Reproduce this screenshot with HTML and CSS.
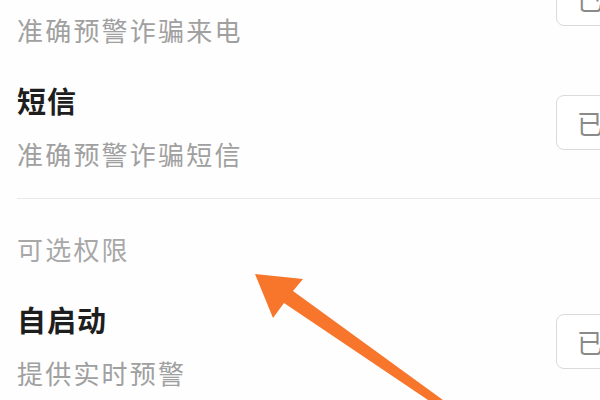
FILE: index.html
```html
<!DOCTYPE html>
<html lang="zh-CN">

<head>
    <meta charset="UTF-8">
    <meta name="viewport" content="width=device-width, initial-scale=1.0">
    <title>权限设置</title>
    <link rel="stylesheet" href="styles.css">
</head>

<body>
    <div class="page">
        <div class="perm-list">
            <div class="perm-item first">
                <div class="perm-info">
                    <div class="perm-title">来电</div>
                    <div class="perm-desc">准确预警诈骗来电</div>
                </div>
                <button class="state-btn">已开启</button>
            </div>

            <div class="perm-item">
                <div class="perm-info">
                    <div class="perm-title">短信</div>
                    <div class="perm-desc">准确预警诈骗短信</div>
                </div>
                <button class="state-btn">已开启</button>
            </div>

            <div class="divider"></div>

            <div class="section-title">可选权限</div>

            <div class="perm-item">
                <div class="perm-info">
                    <div class="perm-title">自启动</div>
                    <div class="perm-desc">提供实时预警</div>
                </div>
                <button class="state-btn">已开启</button>
            </div>
        </div>

        <!-- pointer drawn over the screenshot -->
        <svg class="arrow" width="600" height="400" viewBox="0 0 600 400">
            <polygon points="255,274 303,279 293,291 443,400 450,412 436,412 428,400 284,303 273,318" fill="#f7762b" />
        </svg>
    </div>
</body>

</html>
```

FILE: styles.css
```css
* {
    margin: 0;
    padding: 0;
    box-sizing: border-box;
}

html, body {
    overflow: hidden;
}

body {
    font-family: "Noto Sans CJK SC", "Noto Sans", sans-serif;
    background: #fefefe;
    width: 600px;
    height: 400px;
}

.page {
    position: relative;
    width: 600px;
    height: 400px;
    overflow: hidden;
}

.perm-list {
    width: 676px;
    padding-left: 17px;
}

.perm-item {
    display: flex;
    align-items: center;
    justify-content: space-between;
    padding: 16px 0 15px;
}

.perm-item.first {
    margin-top: -61px;
}

.perm-title {
    font-size: 29px;
    line-height: 42px;
    font-weight: 700;
    color: #1e1e1e;
    letter-spacing: 1px;
}

.perm-desc {
    font-size: 26px;
    line-height: 36px;
    margin-top: 15px;
    color: #a0a0a0;
    letter-spacing: 2.2px;
}

.state-btn {
    height: 55px;
    margin-top: -6px;
    padding: 0 20px;
    border: 1.5px solid #dadada;
    border-radius: 8px;
    background: #fff;
    font-family: inherit;
    font-size: 26px;
    color: #8a8a8a;
}

.divider {
    height: 1px;
    background: #e9e9e9;
    margin-top: 11px;
}

.section-title {
    font-size: 26px;
    line-height: 36px;
    margin-top: 32px;
    margin-bottom: 15px;
    color: #a8a8a8;
    letter-spacing: 2.2px;
}

.arrow {
    position: absolute;
    top: 0;
    left: 0;
}
```
